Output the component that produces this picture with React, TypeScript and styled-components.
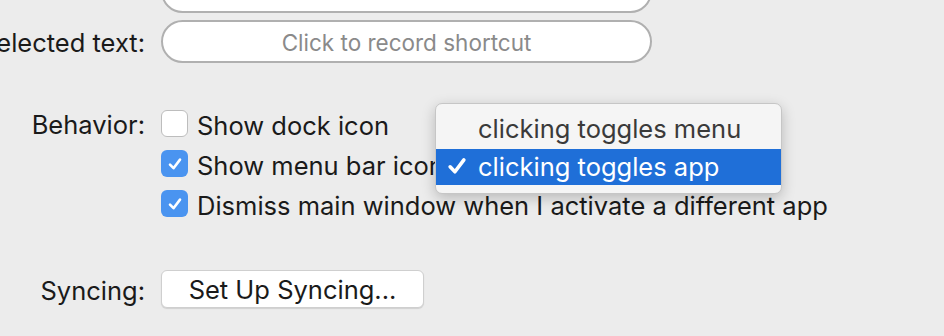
import React from "react";
import styled, { createGlobalStyle } from "styled-components";

const Global = createGlobalStyle`
  html, body { margin: 0; padding: 0; background: #ececec; }
  body { font-family: Inter, "Liberation Sans", sans-serif; -webkit-font-smoothing: antialiased; }
`;

const Page = styled.div`
  width: 944px;
  height: 336px;
  overflow: hidden;
  background: #ececec;
`;

const Form = styled.div`
  display: grid;
  grid-template-columns: 145px 1fr;
  column-gap: 16px;
  margin-top: -30px;
`;

const Label = styled.div<{ $top?: number; $h: number }>`
  display: flex;
  justify-content: flex-end;
  align-items: center;
  height: ${(p) => p.$h}px;
  margin-top: ${(p) => p.$top ?? 0}px;
  padding-top: 2px;
  box-sizing: border-box;
  font-size: 25.5px;
  color: #1a1a1a;
  white-space: nowrap;
`;

const Cell = styled.div<{ $top?: number }>`
  margin-top: ${(p) => p.$top ?? 0}px;
  position: relative;
`;

const ShortcutField = styled.div`
  width: 491px;
  height: 43px;
  box-sizing: border-box;
  border: 2px solid #b0b0b0;
  border-radius: 22px;
  background: #ffffff;
  display: flex;
  align-items: center;
  justify-content: center;
  padding-top: 1px;
  font-size: 22.5px;
  color: #8a8a8a;
`;

const CheckRow = styled.div`
  height: 40px;
  display: flex;
  align-items: flex-start;
  gap: 9px;
`;

const Box = styled.div<{ $checked?: boolean }>`
  width: 27px;
  height: 27px;
  box-sizing: border-box;
  border-radius: 6px;
  flex: none;
  display: flex;
  align-items: center;
  justify-content: center;
  background: ${(p) => (p.$checked ? "#4a94f0" : "#ffffff")};
  border: ${(p) => (p.$checked ? "none" : "1px solid #bdbdbd")};
`;

const CheckText = styled.span`
  font-size: 25.5px;
  line-height: 27px;
  padding-top: 2px;
  color: #1a1a1a;
  white-space: nowrap;
`;

const Menu = styled.div`
  position: absolute;
  left: 274px;
  top: -7px;
  width: 347px;
  box-sizing: border-box;
  padding: 8px 0;
  background: #f5f5f5;
  border: 1px solid #c6c6c6;
  border-radius: 7px;
  box-shadow: 0 4px 14px rgba(0, 0, 0, 0.22);
  z-index: 2;
`;

const MenuItem = styled.div<{ $active?: boolean }>`
  height: ${(p) => (p.$active ? 36 : 37)}px;
  box-sizing: border-box;
  display: flex;
  align-items: center;
  padding-left: 10px;
  padding-bottom: ${(p) => (p.$active ? 2 : 4)}px;
  background: ${(p) => (p.$active ? "#1f6fd8" : "transparent")};
  color: ${(p) => (p.$active ? "#ffffff" : "#3a3a3a")};
  font-size: 25.5px;
  white-space: nowrap;
`;

const Tick = styled.span`
  width: 32px;
  display: inline-flex;
  align-items: center;
`;

const Button = styled.div`
  width: 263px;
  height: 38px;
  box-sizing: border-box;
  background: #ffffff;
  border: 1px solid #cfcfcf;
  border-radius: 6px;
  box-shadow: 0 1px 1px rgba(0, 0, 0, 0.12);
  display: flex;
  align-items: center;
  justify-content: center;
  padding-top: 1px;
  font-size: 25.5px;
  color: #1a1a1a;
`;

const CheckMark = ({ color = "#fff", size = 16 }: { color?: string; size?: number }) => (
  <svg width={size} height={size} viewBox="0 0 16 16">
    <path d="M3 8.6 L6.5 12.2 L13 3.6" fill="none" stroke={color} strokeWidth={2.6} strokeLinecap="round" strokeLinejoin="round" />
  </svg>
);

export default function App() {
  return (
    <Page>
      <Global />
      <Form>
        <Label $h={43}></Label>
        <Cell>
          <ShortcutField />
        </Cell>

        <Label $h={43} $top={7}>Selected text:</Label>
        <Cell $top={7}>
          <ShortcutField>Click to record shortcut</ShortcutField>
        </Cell>

        <Label $h={27} $top={47}>Behavior:</Label>
        <Cell $top={47}>
          <CheckRow>
            <Box />
            <CheckText>Show dock icon</CheckText>
          </CheckRow>
          <CheckRow>
            <Box $checked>
              <CheckMark />
            </Box>
            <CheckText>Show menu bar icon</CheckText>
          </CheckRow>
          <CheckRow>
            <Box $checked>
              <CheckMark />
            </Box>
            <CheckText>Dismiss main window when I activate a different app</CheckText>
          </CheckRow>
          <Menu>
            <MenuItem>
              <Tick />
              clicking toggles menu
            </MenuItem>
            <MenuItem $active>
              <Tick>
                <CheckMark size={22} />
              </Tick>
              clicking toggles app
            </MenuItem>
          </Menu>
        </Cell>

        <Label $h={38} $top={40}>Syncing:</Label>
        <Cell $top={40}>
          <Button>Set Up Syncing...</Button>
        </Cell>
      </Form>
    </Page>
  );
}
